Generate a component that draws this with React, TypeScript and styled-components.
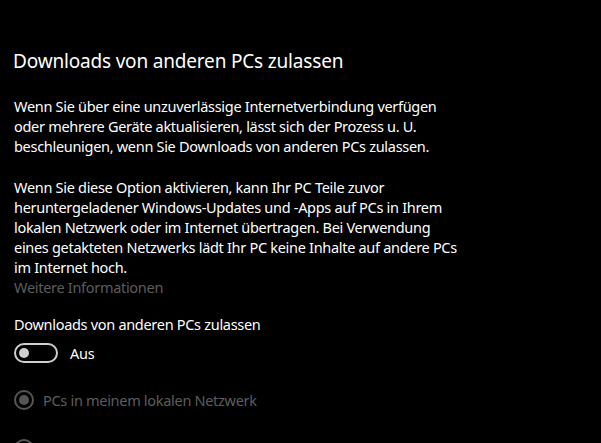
import React from "react";
import styled, { createGlobalStyle } from "styled-components";

const GlobalStyle = createGlobalStyle`
  html, body {
    margin: 0;
    padding: 0;
    background: #000;
  }
  body {
    font-family: "Segoe UI", "Noto Sans", "Liberation Sans", sans-serif;
    color: #fff;
    -webkit-font-smoothing: antialiased;
  }
`;

const Page = styled.div`
  width: 601px;
  height: 443px;
  overflow: hidden;
  background: #000;
  padding: 47px 0 0 13px;
  box-sizing: border-box;
`;

const Titel = styled.h2`
  margin: 0 0 21px 0;
  font-size: 19px;
  font-weight: 400;
  letter-spacing: -0.18px;
  line-height: 28px;
  color: #fff;
`;

const Absatz = styled.p`
  margin: 0 0 21px 1px;
  font-size: 14.5px;
  letter-spacing: -0.3px;
  line-height: 20px;
  white-space: nowrap;
  color: #fff;
`;

const Link = styled.div`
  margin: -21px 0 17px 1px;
  font-size: 14.5px;
  letter-spacing: -0.3px;
  line-height: 20px;
  color: #5d5d5d;
`;

const Label = styled.div`
  margin: 0 0 9px 1px;
  font-size: 14.5px;
  letter-spacing: -0.3px;
  line-height: 20px;
  color: #fff;
`;

const ToggleZeile = styled.div`
  display: flex;
  align-items: center;
  gap: 12px;
  margin-left: 1px;
`;

const Toggle = styled.div<{ $an?: boolean }>`
  width: 44px;
  height: 20px;
  box-sizing: border-box;
  border: 2px solid #cfcfcf;
  border-radius: 10px;
  display: flex;
  align-items: center;
  padding: 0 3px;
  justify-content: ${(p) => (p.$an ? "flex-end" : "flex-start")};

  &::after {
    content: "";
    width: 10px;
    height: 10px;
    border-radius: 50%;
    background: #cfcfcf;
  }
`;

const ToggleText = styled.span`
  font-size: 14.5px;
  letter-spacing: -0.3px;
  line-height: 20px;
  color: #fff;
`;

const RadioListe = styled.div`
  display: flex;
  flex-direction: column;
  gap: 25px;
  margin: 25px 0 0 1px;
`;

const RadioZeile = styled.div`
  display: flex;
  align-items: center;
  gap: 9px;
  height: 24px;
`;

const RadioKreis = styled.div<{ $gewaehlt?: boolean }>`
  width: 20px;
  height: 20px;
  box-sizing: border-box;
  border: 2px solid #555;
  border-radius: 50%;
  display: flex;
  align-items: center;
  justify-content: center;

  &::after {
    content: "";
    display: ${(p) => (p.$gewaehlt ? "block" : "none")};
    width: 10px;
    height: 10px;
    border-radius: 50%;
    background: #555;
  }
`;

const RadioText = styled.span`
  font-size: 14.5px;
  letter-spacing: -0.3px;
  line-height: 20px;
  white-space: nowrap;
  color: #5d5d5d;
`;

export default function App() {
  return (
    <>
      <GlobalStyle />
      <Page>
        <Titel>Downloads von anderen PCs zulassen</Titel>
        <Absatz>
          Wenn Sie über eine unzuverlässige Internetverbindung verfügen
          <br />
          oder mehrere Geräte aktualisieren, lässt sich der Prozess u. U.
          <br />
          beschleunigen, wenn Sie Downloads von anderen PCs zulassen.
        </Absatz>
        <Absatz>
          Wenn Sie diese Option aktivieren, kann Ihr PC Teile zuvor
          <br />
          heruntergeladener Windows-Updates und -Apps auf PCs in Ihrem
          <br />
          lokalen Netzwerk oder im Internet übertragen. Bei Verwendung
          <br />
          eines getakteten Netzwerks lädt Ihr PC keine Inhalte auf andere PCs
          <br />
          im Internet hoch.
        </Absatz>
        <Link>Weitere Informationen</Link>
        <Label>Downloads von anderen PCs zulassen</Label>
        <ToggleZeile>
          <Toggle />
          <ToggleText>Aus</ToggleText>
        </ToggleZeile>
        <RadioListe>
          <RadioZeile>
            <RadioKreis $gewaehlt />
            <RadioText>PCs in meinem lokalen Netzwerk</RadioText>
          </RadioZeile>
          <RadioZeile>
            <RadioKreis />
            <RadioText>PCs in meinem lokalen Netzwerk und PCs im Internet</RadioText>
          </RadioZeile>
        </RadioListe>
      </Page>
    </>
  );
}
